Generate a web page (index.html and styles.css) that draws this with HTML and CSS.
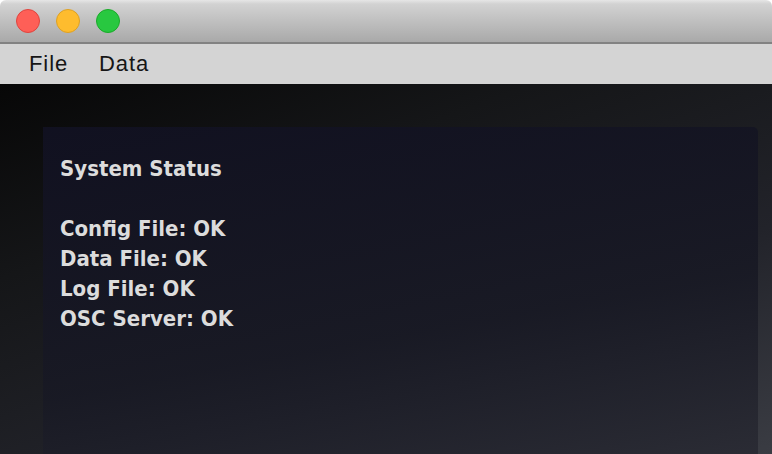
FILE: index.html
```html
<!DOCTYPE html>
<html>
<head>
<meta charset="utf-8">
<link rel="stylesheet" href="styles.css">
</head>
<body>
<div class="window">
  <div class="titlebar">
    <span class="light red"></span>
    <span class="light yellow"></span>
    <span class="light green"></span>
  </div>
  <div class="menubar">
    <span class="menu-item">File</span>
    <span class="menu-item">Data</span>
  </div>
  <div class="content">
    <div class="panel">
      <div class="panel-title">System Status</div>
      <div class="status-list">
        <div class="status-line">Config File: OK</div>
        <div class="status-line">Data File: OK</div>
        <div class="status-line">Log File: OK</div>
        <div class="status-line">OSC Server: OK</div>
      </div>
    </div>
  </div>
</div>
</body>
</html>
```
FILE: styles.css
```css
html, body {
  margin: 0;
  padding: 0;
  width: 772px;
  height: 454px;
  overflow: hidden;
  background: #ffffff;
}
.window {
  display: flex;
  flex-direction: column;
  height: 454px;
  border-radius: 6px 6px 0 0;
  overflow: hidden;
}
.titlebar {
  height: 42px;
  flex: none;
  display: flex;
  align-items: center;
  gap: 16px;
  padding-left: 16px;
  background: linear-gradient(#e6e6e6 0px, #d2d2d2 4px, #a9a9a9 100%);
  border-bottom: 2px solid #828282;
  box-sizing: content-box;
}
.light {
  width: 24px;
  height: 24px;
  border-radius: 50%;
  box-sizing: border-box;
}
.red { background: #fe5f57; border: 1px solid #e0443e; }
.yellow { background: #febc2e; border: 1px solid #dea123; }
.green { background: #28c840; border: 1px solid #1aab29; }
.menubar {
  height: 40px;
  flex: none;
  display: flex;
  align-items: center;
  gap: 31px;
  padding-left: 29px;
  background: #d4d4d4;
  font-family: "Liberation Sans", Arial, sans-serif;
  font-size: 22px;
  letter-spacing: 0.9px;
  color: #161616;
}
.menu-item {
  margin-top: -1px;
}
.content {
  flex: 1;
  padding: 43px 14px 0 43px;
  background: linear-gradient(160deg, #070707 0%, #151618 30%, #22232a 65%, #3a3c43 100%);
  display: flex;
  flex-direction: column;
}
.panel {
  flex: 1;
  border-radius: 0 5px 0 0;
  background: linear-gradient(170deg, rgba(17,17,33,0.97) 0%, rgba(24,25,36,0.9) 60%, rgba(40,41,50,0.85) 100%);
  padding: 27px 17px 0 17px;
  font-family: "DejaVu Sans Condensed", "DejaVu Sans", sans-serif;
  font-weight: bold;
  font-size: 22px;
  color: #dcdcdc;
}
.panel-title {
  line-height: 30px;
  margin-bottom: 30px;
}
.status-line {
  line-height: 30px;
}
```
